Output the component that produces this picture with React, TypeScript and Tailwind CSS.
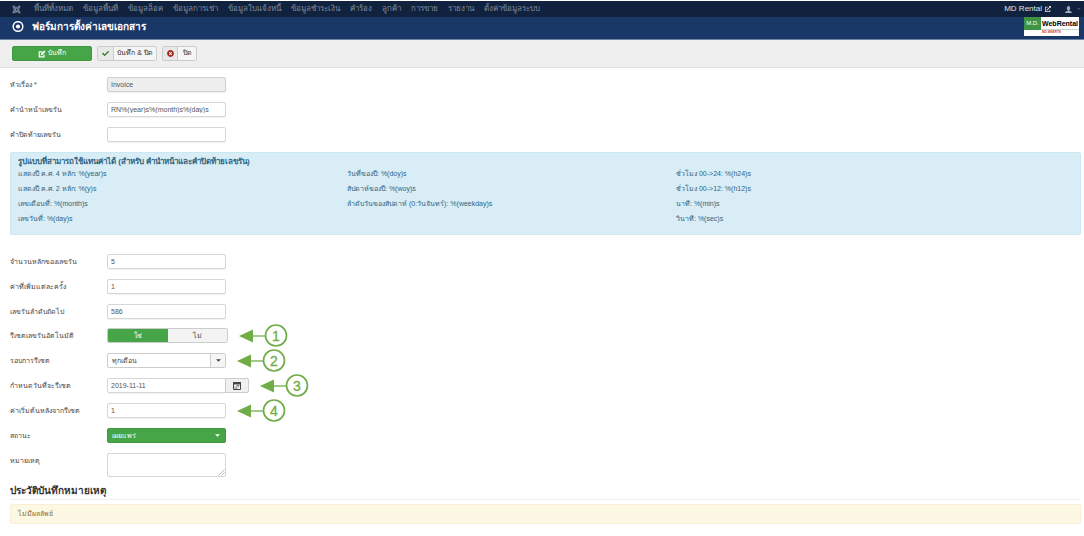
import type { ReactNode } from 'react';
import { FaCheck, FaExternalLinkAlt, FaJoomla, FaTimesCircle } from 'react-icons/fa';

const menuItems = [
    'พื้นที่ทั้งหมด',
    'ข้อมูลพื้นที่',
    'ข้อมูลล็อค',
    'ข้อมูลการเช่า',
    'ข้อมูลใบแจ้งหนี้',
    'ข้อมูลชำระเงิน',
    'คำร้อง',
    'ลูกค้า',
    'การขาย',
    'รายงาน',
    'ตั้งค่าข้อมูลระบบ',
];

const patternColumns = [
    ['แสดงปี ค.ศ. 4 หลัก: %(year)s', 'แสดงปี ค.ศ. 2 หลัก: %(y)s', 'เลขเดือนที่: %(month)s', 'เลขวันที่: %(day)s'],
    ['วันที่ของปี: %(doy)s', 'สัปดาห์ของปี: %(woy)s', 'ลำดับวันของสัปดาห์ (0:วันจันทร์): %(weekday)s'],
    ['ชั่วโมง 00->24: %(h24)s', 'ชั่วโมง 00->12: %(h12)s', 'นาที: %(min)s', 'วินาที: %(sec)s'],
];

const inputClass =
    'h-[15px] w-[119px] rounded-[2px] border border-[#d6d6d6] bg-white px-[3px] text-[7px] leading-[13px] text-[#555] shadow-[0_1px_1px_rgba(0,0,0,0.06)] disabled:border-[#cfcfcf] disabled:bg-[#eeeeee]';

function Field({ id, label, children }: { id: string; label: string; children: ReactNode }) {
    return (
        <div className="flex min-h-[15px]">
            <label htmlFor={id} className="w-[97px] shrink-0 whitespace-nowrap leading-[15px]">
                {label}
            </label>
            {children}
        </div>
    );
}

function TextField({ id, label, value, disabled }: { id: string; label: string; value: string; disabled?: boolean }) {
    return (
        <Field id={id} label={label}>
            <input id={id} type="text" defaultValue={value} disabled={disabled} className={inputClass} />
        </Field>
    );
}

function Callout({ number }: { number: number }) {
    return (
        <div className="ml-[11px] flex h-[15px] items-center">
            <svg width="50" height="24" viewBox="0 0 50 24" className="shrink-0" role="img" aria-label={`${number}`}>
                <path d="M0 12 14 5.500v13z" fill="#70ad47" />
                <path d="M12 12h14" stroke="#70ad47" strokeWidth="1.300" />
                <circle cx="37" cy="11.500" r="10.500" fill="#fff" stroke="#70ad47" strokeWidth="1.700" />
                <text x="37" y="16.500" textAnchor="middle" fontSize="14" fill="#70ad47" stroke="#70ad47" strokeWidth="0.300">
                    {number}
                </text>
            </svg>
        </div>
    );
}

function Caret({ className }: { className: string }) {
    return (
        <svg viewBox="0 0 6 3" className={className} aria-hidden>
            <path d="M0 0h6L3 3z" fill="currentColor" />
        </svg>
    );
}

function EditIcon() {
    return (
        <svg width="8" height="8" viewBox="0 0 16 16" aria-hidden>
            <path d="M12 9v4.500H2.500V3.500H9" fill="none" stroke="currentColor" strokeWidth="2.500" />
            <path d="M5.500 11l.5-3.500L12.500 1 15 3.500 8.500 10.200z" fill="currentColor" />
        </svg>
    );
}

function CalendarIcon() {
    return (
        <svg width="8" height="8" viewBox="0 0 8 8" aria-hidden>
            <path d="M0.500 0.500h7v7h-7z" fill="#fff" stroke="#444" />
            <path d="M0 0h8v2.500H0z" fill="#444" />
            <path d="M3.500 3.500h3M1.500 4.900h5M1.500 6.300h3" stroke="#555" strokeWidth="0.900" strokeDasharray="1.200 0.400" />
        </svg>
    );
}

function UserIcon() {
    return (
        <svg width="7" height="7" viewBox="0 0 14 14" aria-hidden>
            <ellipse cx="7" cy="4.500" rx="3.200" ry="4.500" fill="currentColor" />
            <path d="M5.500 8h3v2l5 1.500V14H.5v-2.500l5-1.500z" fill="currentColor" />
        </svg>
    );
}

function BrandLogo() {
    return (
        <div className="flex h-[19px] w-[55px] flex-col bg-white">
            <div className="flex h-[13px] items-center border-b border-[#c9d8cc]">
                <span className="flex h-[13px] w-[17px] items-center justify-center bg-[#3e9444] text-[6px] text-white">M.D.</span>
                <span className="pl-px text-[7px] leading-[13px] font-bold text-black">WebRental</span>
            </div>
            <span className="text-center text-[3px] leading-[5px] font-bold text-[#d33a3a]">MD-WEBRTN</span>
        </div>
    );
}

export default function App() {
    return (
        <div className="bg-white pt-px font-['Liberation_Sans','Noto_Sans',sans-serif] text-[7px] text-[#444]">
            <nav className="flex h-[16px] items-center justify-between bg-[#10223e] pr-[3px] pl-3 text-[8px] text-[#7f8a9b]">
                <div className="flex items-center">
                    <FaJoomla className="mr-[13px] size-[9px]" />
                    <ul className="flex gap-[10px] leading-[16px]">
                        {menuItems.map((item) => (
                            <li key={item}>
                                <a href="#" className="whitespace-nowrap">
                                    {item}
                                </a>
                            </li>
                        ))}
                    </ul>
                </div>
                <div className="flex items-center">
                    <a href="#" className="flex items-center gap-[3px] text-[#dfe3e9]">
                        MD Rental
                        <FaExternalLinkAlt className="size-[6px]" />
                    </a>
                    <button type="button" aria-label="User" className="ml-[14px] flex items-center gap-[5px] text-[#a3acb9]">
                        <UserIcon />
                        <Caret className="h-[2px] w-[4px] text-[#3c4a61]" />
                    </button>
                </div>
            </nav>

            <header className="flex h-[23px] items-start justify-between border-b border-[#6d83a6] bg-[#1a3867] pr-[5px] pl-3 text-white">
                <div className="flex h-[19px] items-center gap-[8px]">
                    <svg width="12" height="12" viewBox="0 0 12 12" aria-hidden>
                        <circle cx="6" cy="5.500" r="4.800" fill="none" stroke="#fff" strokeWidth="1.500" />
                        <circle cx="6" cy="5.500" r="2.100" fill="#fff" />
                    </svg>
                    <h1 className="text-[10px] leading-[19px] font-bold">ฟอร์มการตั้งค่าเลขเอกสาร</h1>
                </div>
                <BrandLogo />
            </header>

            <div className="flex h-[28px] items-center gap-[5px] border-b border-[#dedede] bg-[#efefef] px-3 text-[#333]">
                <button
                    type="button"
                    className="flex h-[15px] w-[80px] items-center justify-center gap-[2px] rounded-[2px] border border-[#409740] bg-[#46a546] text-white"
                >
                    <EditIcon />
                    บันทึก
                </button>
                <button type="button" className="flex h-[15px] w-[60px] items-center overflow-hidden rounded-[2px] border border-[#cccccc] bg-[#f5f5f5]">
                    <span className="flex h-full w-[16px] items-center justify-center border-r border-[#cccccc] bg-[#e8e8e8]">
                        <FaCheck className="size-[7px] text-[#378137]" />
                    </span>
                    <span className="flex-1 whitespace-nowrap">บันทึก &amp; ปิด</span>
                </button>
                <button type="button" className="flex h-[15px] w-[35px] items-center overflow-hidden rounded-[2px] border border-[#cccccc] bg-[#f5f5f5]">
                    <span className="flex h-full w-[15px] items-center justify-center border-r border-[#cccccc] bg-[#e8e8e8]">
                        <FaTimesCircle className="size-[7px] text-[#9d261d]" />
                    </span>
                    <span className="flex-1">ปิด</span>
                </button>
            </div>

            <main className="pt-[9px] pr-[3px] pb-3 pl-[10px]">
                <div className="flex flex-col gap-[10px]">
                    <TextField id="title" label="หัวเรื่อง *" value="Invoice" disabled />
                    <TextField id="prefix" label="คำนำหน้าเลขรัน" value="RN%(year)s%(month)s%(day)s" />
                    <TextField id="suffix" label="คำปิดท้ายเลขรัน" value="" />
                </div>

                <section className="mt-[10px] mb-[19px] h-[83px] rounded-[2px] border border-[#c8e9f2] bg-[#d9edf7] px-[7px] pt-1 text-[#2e6480]">
                    <h2 className="text-[8px] leading-[9px] font-bold">รูปแบบที่สามารถใช้แทนค่าได้ (สำหรับ คำนำหน้าและคำปิดท้ายเลขรัน)</h2>
                    <div className="grid grid-cols-3 pr-[68px]">
                        {patternColumns.map((column) => (
                            <ul key={column[0]} className="leading-[15px]">
                                {column.map((pattern) => (
                                    <li key={pattern}>{pattern}</li>
                                ))}
                            </ul>
                        ))}
                    </div>
                </section>

                <div className="flex flex-col gap-[10px]">
                    <TextField id="digits" label="จำนวนหลักของเลขรัน" value="5" />
                    <TextField id="step" label="ค่าที่เพิ่มแต่ละครั้ง" value="1" />
                    <TextField id="next" label="เลขรันลำดับถัดไป" value="586" />
                </div>

                <div className="mt-[9px] flex flex-col gap-[10px]">
                    <Field id="reset-yes" label="รีเซตเลขรันอัตโนมัติ">
                        <div className="flex h-[15px] w-[121px] overflow-hidden rounded-[2px] border border-[#cccccc] text-center leading-[13px]">
                            <label className="flex-1 bg-[#46a546] text-white">
                                <input id="reset-yes" type="radio" name="reset" defaultChecked className="sr-only" />
                                ใช่
                            </label>
                            <label className="flex-1 bg-[#f3f3f3]">
                                <input type="radio" name="reset" className="sr-only" />
                                ไม่
                            </label>
                        </div>
                        <Callout number={1} />
                    </Field>
                    <Field id="cycle" label="รอบการรีเซต">
                        <div className="relative h-[15px] w-[119px]">
                            <select
                                id="cycle"
                                className="block h-[15px] w-full appearance-none rounded-[2px] border border-[#cccccc] bg-white px-1 leading-[13px] text-[#444]"
                            >
                                <option>ทุกเดือน</option>
                            </select>
                            <span className="pointer-events-none absolute inset-y-px right-px flex w-[15px] items-center justify-center border-l border-[#cccccc] bg-[#f5f5f5]">
                                <Caret className="h-[3px] w-[5px]" />
                            </span>
                        </div>
                        <Callout number={2} />
                    </Field>
                    <Field id="reset-date" label="กำหนดวันที่จะรีเซต">
                        <div className="flex h-[15px]">
                            <input id="reset-date" type="text" defaultValue="2019-11-11" className={inputClass} />
                            <button
                                type="button"
                                aria-label="Calendar"
                                className="-ml-px flex h-[15px] w-[24px] items-center justify-center rounded-r-[2px] border border-[#cccccc] bg-[#f0f0f0]"
                            >
                                <CalendarIcon />
                            </button>
                        </div>
                        <Callout number={3} />
                    </Field>
                    <Field id="start" label="ค่าเริ่มต้นหลังจากรีเซต">
                        <input id="start" type="text" defaultValue="1" className={inputClass} />
                        <Callout number={4} />
                    </Field>
                    <Field id="status" label="สถานะ">
                        <div className="relative h-[15px] w-[119px] text-white">
                            <select
                                id="status"
                                className="block h-[15px] w-full appearance-none rounded-[2px] border border-[#409740] bg-[#46a546] px-1 leading-[13px] text-white"
                            >
                                <option>เผยแพร่</option>
                            </select>
                            <Caret className="pointer-events-none absolute top-[6px] right-[6px] h-[3px] w-[5px]" />
                        </div>
                    </Field>
                    <Field id="note" label="หมายเหตุ">
                        <div className="relative h-[24px] w-[119px]">
                            <textarea id="note" className="block h-[24px] w-full resize-none rounded-[2px] border border-[#d6d6d6] px-1" />
                            <svg viewBox="0 0 7 7" className="pointer-events-none absolute right-px bottom-px size-[7px]" aria-hidden>
                                <path d="M0.500 6.500l6-6M3.500 6.500l3-3" stroke="#999" strokeWidth="0.700" />
                            </svg>
                        </div>
                    </Field>
                </div>

                <h2 className="mt-[5px] mb-1 border-b border-[#f0f0f0] text-[10px] leading-[17px] font-bold text-[#333]">ประวัติบันทึกหมายเหตุ</h2>
                <p className="h-[20px] rounded-[2px] border border-[#fbeed5] bg-[#fcf8e3] px-[7px] leading-[18px] text-[#8a6d3b]">ไม่มีผลลัพธ์</p>
            </main>
        </div>
    );
}
